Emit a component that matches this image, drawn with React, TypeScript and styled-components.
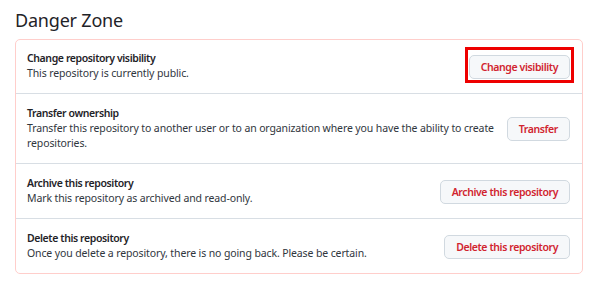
import React from "react";
import styled, { createGlobalStyle } from "styled-components";

const GlobalStyle = createGlobalStyle`
  html, body {
    margin: 0;
    padding: 0;
    background: #ffffff;
  }
  body {
    font-family: "Noto Sans", "Open Sans", sans-serif;
    color: #1f2328;
  }
`;

const Page = styled.div`
  padding: 8px 0 0 15px;
  width: 568px;
`;

const Heading = styled.h2`
  margin: 0 0 7px;
  font-size: 18px;
  line-height: 24px;
  font-weight: 400;
  letter-spacing: -0.2px;
  color: #1f2328;
`;

const Box = styled.div`
  border: 1px solid #ffcecb;
  border-radius: 5px;
  display: flex;
  flex-direction: column;
`;

const Row = styled.div`
  display: flex;
  align-items: center;
  padding: 11px 12px 12px 11px;
  & + & {
    padding-top: 12px;
    border-top: 1px solid #d8dee4;
  }
`;

const Info = styled.div`
  flex: 1;
  min-width: 0;
  padding-right: 4px;
`;

const Title = styled.div`
  font-size: 10.5px;
  line-height: 15px;
  font-weight: 600;
  letter-spacing: -0.4px;
  color: #1f2328;
`;

const Desc = styled.div`
  font-size: 10.5px;
  line-height: 15px;
  letter-spacing: -0.12px;
  color: #30363d;
`;

const ButtonWrap = styled.div`
  position: relative;
  flex: none;
`;

const Button = styled.button`
  height: 24px;
  padding: 0 11px;
  border: 1px solid #d1d9e0;
  border-radius: 5px;
  background: #f6f8fa;
  color: #d1242f;
  font-family: "Noto Sans", "Open Sans", sans-serif;
  font-size: 10.5px;
  font-weight: 600;
  letter-spacing: -0.4px;
  line-height: 22px;
  white-space: nowrap;
  cursor: pointer;
`;

const Highlight = styled.span`
  position: absolute;
  top: -7px;
  left: -4px;
  right: -4px;
  bottom: -4px;
  border: 3px solid #ee0000;
  pointer-events: none;
`;

type Item = {
  title: string;
  desc: string;
  action: string;
  highlight?: boolean;
};

const items: Item[] = [
  {
    title: "Change repository visibility",
    desc: "This repository is currently public.",
    action: "Change visibility",
    highlight: true,
  },
  {
    title: "Transfer ownership",
    desc: "Transfer this repository to another user or to an organization where you have the ability to create repositories.",
    action: "Transfer",
  },
  {
    title: "Archive this repository",
    desc: "Mark this repository as archived and read-only.",
    action: "Archive this repository",
  },
  {
    title: "Delete this repository",
    desc: "Once you delete a repository, there is no going back. Please be certain.",
    action: "Delete this repository",
  },
];

export default function App() {
  return (
    <>
      <GlobalStyle />
      <Page>
        <Heading>Danger Zone</Heading>
        <Box>
          {items.map((it) => (
            <Row key={it.title}>
              <Info>
                <Title>{it.title}</Title>
                <Desc>{it.desc}</Desc>
              </Info>
              <ButtonWrap>
                <Button type="button">{it.action}</Button>
                {it.highlight && <Highlight />}
              </ButtonWrap>
            </Row>
          ))}
        </Box>
      </Page>
    </>
  );
}
